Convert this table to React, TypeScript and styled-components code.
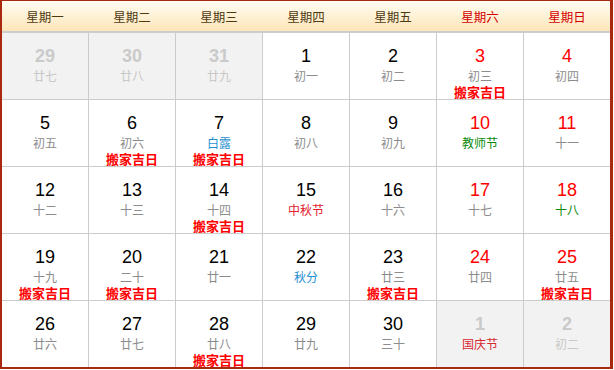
import React from "react";
import styled, { createGlobalStyle } from "styled-components";

const Global = createGlobalStyle`
  html, body { margin: 0; padding: 0; background: #fff; }
  * { box-sizing: border-box; }
`;

const CJK = `"Noto Sans CJK SC", "Liberation Sans", sans-serif`;

type Tone = "normal" | "weekend" | "muted";
type NoteTone = "gray" | "blue" | "green" | "red" | "crimson" | "muted";

interface Day {
  n: number;
  note: string;
  tone?: Tone;
  noteTone?: NoteTone;
  move?: boolean;
}

const Frame = styled.div`
  width: 613px;
  border-style: solid;
  border-color: #a82810;
  border-width: 1px 3px 2px 2px;
  background: #fff;
`;

const Header = styled.div`
  display: grid;
  grid-template-columns: repeat(7, 1fr);
  column-gap: 1px;
  height: 32px;
  background: linear-gradient(#fffcf3, #fde6b9);
  border-bottom: 2px solid #cdcdcd;
`;

const HeadCell = styled.div<{ $weekend?: boolean }>`
  display: flex;
  align-items: center;
  justify-content: center;
  font-family: ${CJK};
  font-size: 12.5px;
  color: ${(p) => (p.$weekend ? "#d40000" : "#4f3a10")};
`;

const Grid = styled.div`
  display: grid;
  grid-template-columns: repeat(7, 1fr);
  grid-auto-rows: 66px;
  gap: 1px;
  background: #cccccc;
`;

const Cell = styled.div<{ $muted?: boolean }>`
  display: flex;
  flex-direction: column;
  align-items: center;
  padding-top: 13px;
  background: ${(p) => (p.$muted ? "#f2f2f2" : "#fff")};
`;

const numColor: Record<Tone, string> = {
  normal: "#000",
  weekend: "#ff0000",
  muted: "#cacaca",
};

const Num = styled.div<{ $tone: Tone }>`
  font-family: "Liberation Sans", Arial, sans-serif;
  font-size: 18px;
  line-height: 21px;
  font-weight: ${(p) => (p.$tone === "muted" ? 700 : 400)};
  color: ${(p) => numColor[p.$tone]};
`;

const noteColor: Record<NoteTone, string> = {
  gray: "#8c8c8c",
  blue: "#1f8fd2",
  green: "#0a8a0a",
  red: "#e4202c",
  crimson: "#d82830",
  muted: "#c8c8c8",
};

const Note = styled.div<{ $tone: NoteTone }>`
  font-family: ${CJK};
  font-size: 12px;
  line-height: 17px;
  color: ${(p) => noteColor[p.$tone]};
`;

const Move = styled.div`
  font-family: ${CJK};
  font-size: 13px;
  line-height: 15px;
  font-weight: 700;
  color: #ff0000;
`;

const heads = ["星期一", "星期二", "星期三", "星期四", "星期五", "星期六", "星期日"];

const days: Day[] = [
  { n: 29, note: "廿七", tone: "muted", noteTone: "muted" },
  { n: 30, note: "廿八", tone: "muted", noteTone: "muted" },
  { n: 31, note: "廿九", tone: "muted", noteTone: "muted" },
  { n: 1, note: "初一" },
  { n: 2, note: "初二" },
  { n: 3, note: "初三", tone: "weekend", move: true },
  { n: 4, note: "初四", tone: "weekend" },

  { n: 5, note: "初五" },
  { n: 6, note: "初六", move: true },
  { n: 7, note: "白露", noteTone: "blue", move: true },
  { n: 8, note: "初八" },
  { n: 9, note: "初九" },
  { n: 10, note: "教师节", tone: "weekend", noteTone: "green" },
  { n: 11, note: "十一", tone: "weekend" },

  { n: 12, note: "十二" },
  { n: 13, note: "十三" },
  { n: 14, note: "十四", move: true },
  { n: 15, note: "中秋节", noteTone: "red" },
  { n: 16, note: "十六" },
  { n: 17, note: "十七", tone: "weekend" },
  { n: 18, note: "十八", tone: "weekend", noteTone: "green" },

  { n: 19, note: "十九", move: true },
  { n: 20, note: "二十", move: true },
  { n: 21, note: "廿一" },
  { n: 22, note: "秋分", noteTone: "blue" },
  { n: 23, note: "廿三", move: true },
  { n: 24, note: "廿四", tone: "weekend" },
  { n: 25, note: "廿五", tone: "weekend", move: true },

  { n: 26, note: "廿六" },
  { n: 27, note: "廿七" },
  { n: 28, note: "廿八", move: true },
  { n: 29, note: "廿九" },
  { n: 30, note: "三十" },
  { n: 1, note: "国庆节", tone: "muted", noteTone: "crimson" },
  { n: 2, note: "初二", tone: "muted", noteTone: "muted" },
];

export default function App() {
  return (
    <>
      <Global />
      <Frame>
        <Header>
          {heads.map((h, i) => (
            <HeadCell key={h} $weekend={i >= 5}>
              {h}
            </HeadCell>
          ))}
        </Header>
        <Grid>
          {days.map((d, i) => {
            const tone = d.tone ?? "normal";
            return (
              <Cell key={i} $muted={tone === "muted"}>
                <Num $tone={tone}>{d.n}</Num>
                <Note $tone={d.noteTone ?? "gray"}>{d.note}</Note>
                {d.move && <Move>搬家吉日</Move>}
              </Cell>
            );
          })}
        </Grid>
      </Frame>
    </>
  );
}
